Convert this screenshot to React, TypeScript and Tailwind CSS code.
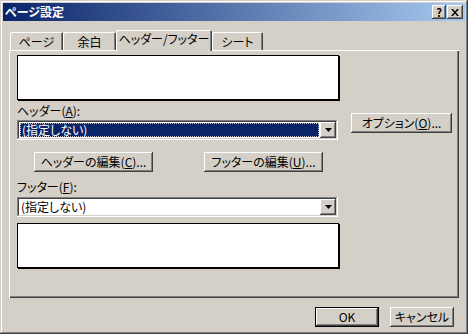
import React from "react";

const raised =
  "shadow-[inset_-1px_-1px_#404040,inset_1px_1px_#ffffff,inset_-2px_-2px_#808080,inset_2px_2px_#d4d0c8]";
const sunken =
  "shadow-[inset_-1px_-1px_#ffffff,inset_1px_1px_#808080,inset_-2px_-2px_#d4d0c8,inset_2px_2px_#404040]";

const Btn: React.FC<{ w: string; def?: boolean; children: React.ReactNode }> = ({ w, def, children }) => (
  <div
    className={`${w} h-[20px] flex items-center justify-center bg-[#d4d0c8] ${
      def ? "border border-black shadow-[inset_-1px_-1px_#404040,inset_1px_1px_#ffffff,inset_-2px_-2px_#808080]" : raised
    }`}
  >
    {children}
  </div>
);

const Combo: React.FC<{ selected?: boolean }> = ({ selected }) => (
  <div className={`w-[321px] h-[20px] bg-white p-[2px] flex ${sunken}`}>
    <div className="flex-1 p-px">
      <div
        className={`h-full flex items-center pl-px ${
          selected ? "bg-[#0a246a] text-white border border-dotted border-[#c0c0c0]" : "text-black"
        }`}
      >
        (指定しない)
      </div>
    </div>
    <div className={`w-[16px] h-[16px] bg-[#d4d0c8] flex items-center justify-center ${raised}`}>
      <svg width="7" height="4" viewBox="0 0 7 4">
        <path d="M0 0h7L3.5 4z" fill="#000" />
      </svg>
    </div>
  </div>
);

const Tab: React.FC<{ w: string; active?: boolean; label: string }> = ({ w, active, label }) => (
  <div
    className={`${w} flex items-center justify-center bg-[#d4d0c8] rounded-t-[2px] shadow-[inset_1px_1px_#ffffff,inset_-1px_0_#404040,inset_-2px_0_#808080] ${
      active ? "h-[21px] relative z-10 -mb-px pb-[3px]" : "h-[18px] pt-px"
    }`}
  >
    {label}
  </div>
);

const Preview = () => (
  <div className="w-[322px] h-[45px] bg-white border border-black shadow-[1px_1px_0_#000]" />
);

export default function App() {
  return (
    <div
      className={`w-[468px] h-[334px] bg-[#d4d0c8] p-[3px] text-[12px] leading-[14px] text-black font-['Noto_Sans_CJK_JP',sans-serif] [font-feature-settings:'palt'] shadow-[inset_-1px_-1px_#404040,inset_1px_1px_#d4d0c8,inset_-2px_-2px_#808080,inset_2px_2px_#ffffff]`}
    >
      {/* title bar */}
      <div className="h-[18px] flex items-center bg-[#0a246a] bg-[image:linear-gradient(90deg,#0a246a,#a6caf0)] pl-[2px] pr-[2px]">
        <span className="text-white font-bold flex-1">ページ設定</span>
        <div className="flex gap-px">
          <div className={`w-[14px] h-[14px] bg-[#d4d0c8] flex items-center justify-center font-bold text-[11px] leading-none ${raised}`}>
            ?
          </div>
          <div className={`w-[16px] h-[14px] bg-[#d4d0c8] flex items-center justify-center ${raised}`}>
            <svg width="8" height="7" viewBox="0 0 8 7">
              <path d="M0 0h2l2 2.5L6 0h2L5 3.5 8 7H6L4 4.5 2 7H0l3-3.5z" fill="#000" />
            </svg>
          </div>
        </div>
      </div>

      {/* tabs */}
      <div className="flex items-end h-[20px] mt-[9px] ml-[7px]">
        <Tab w="w-[53px]" label="ページ" />
        <Tab w="w-[53px]" label="余白" />
        <Tab w="w-[96px]" label="ヘッダー/フッター" active />
        <Tab w="w-[51px]" label="シート" />
      </div>

      {/* panel */}
      <div className="w-[450px] h-[248px] ml-[6px] pl-[8px] pt-[5px] flex shadow-[inset_1px_1px_#ffffff,inset_-1px_-1px_#404040,inset_-2px_-2px_#808080]">
        <div className="w-[323px] flex flex-col">
          <Preview />
          <div className="mt-[4px] h-[14px]">
            ヘッダー(<u>A</u>):
          </div>
          <div className="mt-[2px]">
            <Combo selected />
          </div>
          <div className="mt-[12px] flex">
            <div className="ml-[17px]">
              <Btn w="w-[119px]">
                ヘッダーの編集(<u>C</u>)...
              </Btn>
            </div>
            <div className="ml-[51px]">
              <Btn w="w-[119px]">
                フッターの編集(<u>U</u>)...
              </Btn>
            </div>
          </div>
          <div className="mt-[8px] h-[14px]">
            フッター(<u>F</u>):
          </div>
          <div className="mt-[3px]">
            <Combo />
          </div>
          <div className="mt-[6px]">
            <Preview />
          </div>
        </div>
        <div className="ml-[11px] mt-[58px]">
          <Btn w="w-[101px]">
            オプション(<u>O</u>)...
          </Btn>
        </div>
      </div>

      {/* dialog buttons */}
      <div className="mt-[9px] flex justify-end gap-[11px] pr-[11px]">
        <Btn w="w-[64px]" def>
          OK
        </Btn>
        <Btn w="w-[64px]">キャンセル</Btn>
      </div>
    </div>
  );
}
